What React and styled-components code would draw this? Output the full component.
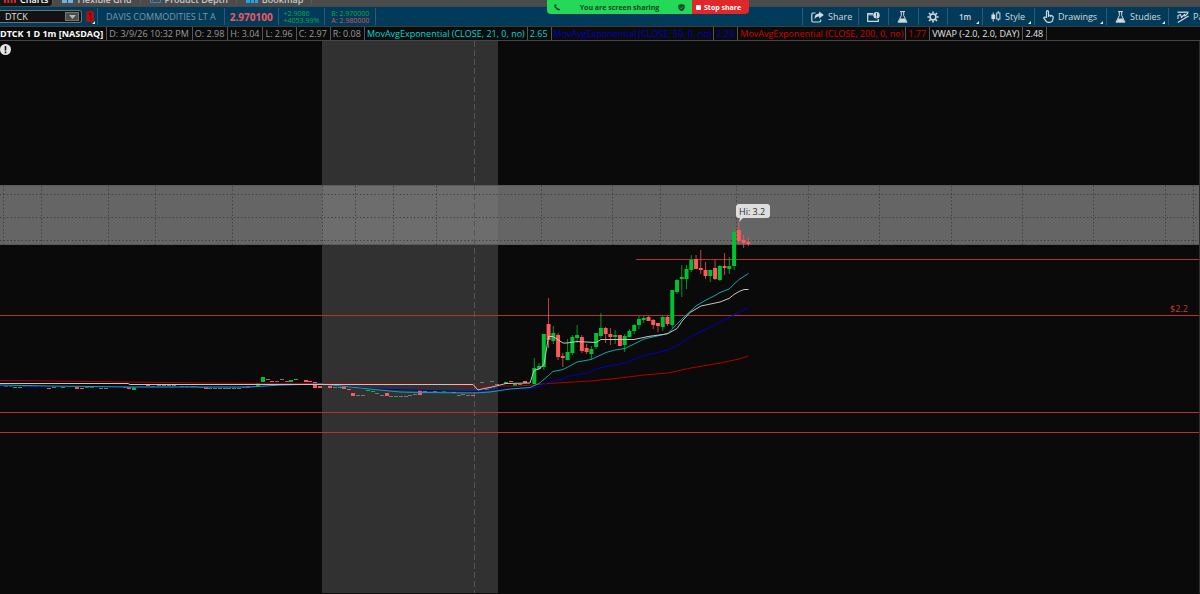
import { useState } from "react";
import styled, { createGlobalStyle } from "styled-components";

const GlobalStyle = createGlobalStyle`
  * {
    box-sizing: border-box;
  }

  body {
    margin: 0;
    background-color: #0a0a0a;
    font-family: "Open Sans", "Noto Sans", sans-serif;
    font-size: 9px;
    overflow-x: hidden;
  }

  button,
  input {
    font: inherit;
    color: inherit;
  }
`;

const Page = styled.div`
  position: relative;
  min-height: 100vh;
  color: #c9d1d6;
`;

const TabStrip = styled.nav`
  display: flex;
  align-items: flex-end;
  height: 7px;
  overflow: hidden;
  background-color: #4b4b4b;
  border-bottom: 1px solid #3c4a52;
`;

const Tab = styled.button`
  display: flex;
  align-items: flex-start;
  gap: 4px;
  height: 12px;
  padding: 0 8px 0 9px;
  border: none;
  border-right: 1px solid #5c5c5c;
  border-radius: 0 0 4px 0;
  background-color: ${(props) => (props.$active ? "#141414" : "#4b4b4b")};
  color: ${(props) => (props.$active ? "#ffffff" : "#c8c8c8")};
  font-weight: 600;
  line-height: 12px;
  white-space: nowrap;

  &:first-child {
    padding-left: 4px;
    padding-right: 4px;
  }
`;

const Toolbar = styled.header`
  display: flex;
  justify-content: space-between;
  height: 19px;
  background-color: #023b59;
  overflow: hidden;
`;

const Group = styled.div`
  display: flex;
  align-items: center;
  white-space: nowrap;
`;

const SymbolBox = styled.div`
  display: flex;
  align-items: center;
  width: 82px;
  height: 13px;
  padding-right: 2px;
  background-color: #121212;
  border: 1px solid #6c7478;
  border-left: none;
  border-radius: 0 3px 3px 0;
`;

const SymbolInput = styled.input`
  flex: 1;
  min-width: 0;
  padding: 0 0 0 5px;
  border: none;
  outline: none;
  background: transparent;
  color: #e0e0e0;
`;

const DropButton = styled.button`
  display: flex;
  align-items: center;
  justify-content: center;
  width: 14px;
  height: 9px;
  padding: 0;
  border: 1px solid #777777;
  background-color: #4c4c4c;
`;

const LinkBadge = styled.button`
  position: relative;
  width: 8px;
  height: 11px;
  margin: 0 3px 0 4px;
  padding: 0;
  border: none;
  border-radius: 2px;
  background-color: #b00d12;
  color: #3a0a0c;
  line-height: 11px;
`;

const Quote = styled.div`
  display: flex;
  flex-direction: column;
  justify-content: center;
  height: 17px;
  padding: 0 ${(props) => props.$pad || 5}px;
  border-left: 1px solid #2c5a74;
  color: ${(props) => props.$color};
  font-size: ${(props) => props.$size || 9}px;
  font-weight: ${(props) => (props.$bold ? 700 : 400)};
  line-height: ${(props) => props.$line || 12}px;
`;

const Down = styled.span`
  color: #cf5563;
`;

const Tool = styled.button`
  position: relative;
  flex: 0 0 ${(props) => props.$width}px;
  display: flex;
  align-items: center;
  gap: 4px;
  height: 17px;
  padding: 0 0 0 8px;
  border: none;
  border-left: 1px solid #2c5a74;
  background: transparent;
  color: #d3dade;
  overflow: hidden;
  cursor: pointer;

  svg {
    flex: none;
  }
`;

const Interval = styled(Tool)`
  padding-left: 11px;
  font-weight: 600;
  font-size: 8px;
`;

const Corner = styled.span`
  position: absolute;
  right: ${(props) => (props.$flush ? -1 : 3)}px;
  bottom: ${(props) => (props.$flush ? -2 : 1)}px;
  border-left: 3px solid transparent;
  border-bottom: 3px solid #e4e8ea;
`;

const StudyRow = styled.div`
  display: flex;
  height: 15px;
  background-color: #0b0b0b;
  border-top: 1px solid #3c3c3c;
  border-bottom: 1px solid #454545;
  overflow: hidden;
`;

const StudyCell = styled.div`
  padding: 0 ${(props) => (props.$long ? 2 : 3)}px 0 2px;
  border-right: 1px solid #555555;
  color: ${(props) => props.$color || "#9a9a9a"};
  font-weight: ${(props) => (props.$bold ? 700 : 400)};
  line-height: 13px;
  white-space: nowrap;

  &:first-child {
    padding-left: 0;
  }
`;

const ShareBanner = styled.div`
  position: absolute;
  top: 0;
  left: 547px;
  display: flex;
  width: 202px;
  height: 14px;
  border-radius: 0 0 4px 4px;
  overflow: hidden;
  font-size: 7px;
  font-weight: 700;
  white-space: nowrap;
`;

const ShareStatus = styled.div`
  flex: 1;
  display: flex;
  align-items: center;
  justify-content: space-between;
  padding: 0 7px;
  background-color: #24d957;
  color: #12482a;
`;

const StopButton = styled.button`
  display: flex;
  align-items: center;
  gap: 3px;
  width: 57px;
  padding: 0 0 0 4px;
  border: none;
  background-color: #e02729;
  color: #ffffff;
`;

const StopSquare = styled.span`
  width: 5px;
  height: 5px;
  border-radius: 1px;
  background-color: #ffffff;
`;

const ChartSvg = styled.svg`
  display: block;
  width: 100%;
  height: auto;
`;

const GREEN = "#00c12f";
const RED = "#ff5a5a";
const GRAY = "#777777";

const studies = [
  { text: "DTCK 1 D 1m [NASDAQ]", color: "#ffffff", bold: true },
  { text: "D: 3/9/26 10:32 PM" },
  { text: "O: 2.98" },
  { text: "H: 3.04" },
  { text: "L: 2.96" },
  { text: "C: 2.97" },
  { text: "R: 0.08" },
  { text: "MovAvgExponential (CLOSE, 21, 0, no)", color: "#00d5d5", long: true },
  { text: "2.65", color: "#00d5d5" },
  { text: "MovAvgExponential (CLOSE, 50, 0, no)", color: "#0000c4", long: true },
  { text: "2.29", color: "#0000c4" },
  { text: "MovAvgExponential (CLOSE, 200, 0, no)", color: "#d00000", long: true },
  { text: "1.77", color: "#d00000" },
  { text: "VWAP (-2.0, 2.0, DAY)", color: "#e4e4e4" },
  { text: "2.48", color: "#e4e4e4" },
];

// high, body top, body bottom, low, up
const candles = [
  [358, 368, 384, 384, 1],
  [363, 366, 369, 370, 1],
  [334, 334, 367, 370, 1],
  [298, 324, 340, 348, 0],
  [326, 333, 341, 344, 1],
  [333, 335, 357, 360, 0],
  [353, 356, 358, 367, 0],
  [339, 352, 360, 360, 1],
  [335, 337, 353, 355, 1],
  [325, 335, 338, 343, 1],
  [335, 337, 351, 353, 0],
  [344, 348, 352, 354, 0],
  [346, 349, 354, 360, 1],
  [333, 333, 347, 349, 1],
  [313, 328, 336, 338, 1],
  [327, 328, 334, 343, 0],
  [328, 334, 337, 345, 0],
  [330, 335, 337, 344, 1],
  [335, 335, 346, 346, 0],
  [334, 336, 345, 352, 1],
  [329, 331, 337, 337, 1],
  [324, 325, 331, 334, 1],
  [316, 319, 325, 329, 1],
  [316, 318, 320, 323, 1],
  [316, 317, 321, 321, 0],
  [319, 320, 325, 329, 0],
  [323, 323, 326, 332, 0],
  [316, 317, 327, 331, 1],
  [316, 317, 324, 326, 0],
  [290, 290, 325, 328, 1],
  [279, 280, 292, 294, 1],
  [265, 277, 279, 297, 1],
  [265, 269, 279, 289, 1],
  [255, 260, 270, 272, 1],
  [255, 259, 269, 269, 0],
  [250, 268, 270, 274, 0],
  [262, 270, 276, 279, 0],
  [270, 270, 276, 282, 1],
  [260, 268, 279, 280, 0],
  [265, 266, 280, 281, 1],
  [253, 266, 268, 275, 0],
  [257, 266, 269, 274, 1],
  [229, 232, 266, 270, 1],
  [222, 230, 241, 244, 0],
  [235, 240, 243, 248, 0],
  [237, 242, 244, 246, 0],
];

// flat overnight bars: x, y, height, color
const ticks = [
  [4, 386, 1, RED], [9, 386, 1, GRAY], [13, 387, 1, GREEN], [18, 387, 1, GREEN],
  [23, 386, 1, GRAY], [28, 386, 1, GRAY], [33, 386, 1, GRAY], [42, 386, 1, RED],
  [47, 388, 1, RED], [52, 387, 1, GRAY], [61, 387, 1, GRAY], [75, 387, 2, RED],
  [80, 388, 1, RED], [85, 387, 1, GRAY], [90, 387, 1, GRAY], [99, 388, 1, GRAY],
  [104, 388, 1, GRAY], [123, 387, 1, RED], [127, 387, 2, RED], [132, 387, 3, GREEN],
  [146, 385, 1, RED], [151, 386, 1, RED], [157, 385, 1, GRAY], [162, 385, 1, GRAY],
  [167, 385, 1, GRAY], [172, 385, 1, GRAY], [180, 386, 1, RED], [185, 386, 1, RED],
  [190, 386, 1, RED], [194, 386, 1, GREEN], [199, 387, 1, RED], [204, 387, 2, RED],
  [208, 388, 1, GRAY], [213, 388, 1, GRAY], [218, 388, 1, GRAY], [223, 388, 1, GRAY],
  [227, 388, 1, GRAY], [232, 388, 1, GRAY], [237, 388, 1, GRAY], [242, 387, 1, RED],
  [246, 386, 2, RED], [251, 386, 1, RED], [256, 383, 3, GREEN], [261, 377, 5, GREEN],
  [266, 379, 1, GRAY], [270, 381, 1, RED], [275, 381, 1, GRAY], [280, 379, 1, GRAY],
  [285, 381, 1, GRAY], [289, 380, 2, GREEN], [294, 379, 1, GREEN], [304, 380, 2, RED],
  [308, 381, 1, RED], [313, 382, 6, RED], [318, 386, 2, RED], [328, 386, 2, RED],
  [333, 387, 1, GRAY], [338, 387, 1, GRAY], [342, 386, 3, RED], [347, 389, 1, RED],
  [351, 393, 3, RED], [356, 395, 1, GRAY], [361, 395, 1, GRAY], [366, 390, 1, GREEN],
  [371, 391, 1, GREEN], [375, 393, 1, GRAY], [380, 395, 1, GRAY], [385, 393, 3, RED],
  [389, 396, 1, GRAY], [394, 396, 1, GREEN], [399, 396, 1, GRAY], [404, 396, 1, GRAY],
  [408, 395, 1, GRAY], [413, 394, 1, GRAY], [418, 390, 5, RED], [423, 391, 1, GRAY],
  [433, 391, 1, GRAY], [442, 391, 1, GREEN], [452, 392, 1, RED], [457, 395, 1, GRAY],
  [461, 394, 1, GRAY], [466, 395, 1, GRAY], [471, 395, 1, RED], [480, 382, 1, GRAY],
  [485, 389, 1, GRAY], [490, 381, 1, GRAY], [495, 384, 1, GRAY], [504, 382, 2, GREEN],
  [509, 381, 1, RED], [513, 384, 2, GREEN], [518, 384, 1, GRAY], [523, 381, 2, RED],
];

const averages = [
  {
    color: "#b00000",
    points:
      "0,380.5 50,381 130,382 200,383 300,383.5 430,384 475,386 520,386 548,383.5 591,381 620,378 644,375 668,373 691,368 720,363 739,359 748.5,356",
  },
  {
    color: "#0000c0",
    points:
      "0,386 50,386.5 130,387 250,387 280,385 322,384 345,386.5 375,389 410,390 475,391.5 500,389 530,388.5 539,386.5 546,383.5 553,381 563,379 567,376.5 587,373 601,367.5 625,363 644,355.5 668,350 677,345.5 691,336.5 701,331.5 715,325 729,317.5 739,312.5 748.5,307.5",
  },
  {
    color: "#10a6a6",
    points:
      "0,385 50,386 130,387 250,387 280,385 322,384 350,387 380,390 400,392 420,392.5 475,393 490,392 510,389 530,387.5 539,383.5 548,376 553,371.5 563,369.5 567,367.5 577,362 591,359.5 606,352.5 615,350 625,348.5 644,339 668,333.5 677,324 682,319 696,306 706,300 715,295.5 720,292.5 729,289 739,279.5 748.5,273.5",
  },
  {
    color: "#c4c4c4",
    points:
      "0,383.5 128,383.5 130,384.5 473,384.5 478,390 484,388.5 492,387 500,385 506,383.5 530,383 534,370.5 539,369 544,364.5 548.5,336.5 553,336.5 563,343 567,343 577,341.5 596,342.5 601,339.5 634,339.5 648,336.5 663,334.5 668,333.5 677,328.5 683,320 690,312.5 701,306 720,302 725,300 729,298.5 734,294.5 739,291.5 744,289.5 748.5,289.5",
  },
];

const gridX = [
  3.5, 41.5, 108.5, 155.5, 232.5, 322.5, 355.5, 393.5, 436.5, 541.5, 612.5,
  660.5, 736.5, 808.5, 879.5, 951.5, 1022.5, 1093.5, 1165.5, 1193.5,
];
const gridY = [194.5, 217.5, 240.5];
const levels = [
  [636, 259.5],
  [0, 315.5],
  [0, 412.5],
  [0, 432.5],
];

function ShareIcon() {
  return (
    <svg width="13" height="12" viewBox="0 0 13 12" fill="none" stroke="currentColor">
      <path d="M4.500 2H2Q.8 2 .8 3.200V9.800Q.8 11 2 11H8.500Q9.700 11 9.700 9.800V8.500" strokeWidth="1.2" />
      <path
        d="M8.200 .6 12.800 4 8.200 7.400V5.400C6 5.300 4.700 6 3.800 8.200 3.300 4.800 5 2.700 8.200 2.600z"
        fill="currentColor"
        stroke="none"
      />
    </svg>
  );
}

function HandIcon() {
  return (
    <svg width="11" height="13" viewBox="0 0 11 13" fill="none" stroke="currentColor" strokeLinejoin="round">
      <path
        d="M3.500 7.500V1.700a1 1 0 0 1 2 0V5l3.600.8q1.200.3 1.100 1.500L9.700 10Q9.300 12.300 7 12.300H5Q3.800 12.300 3 11.200L.8 8.200Q.6 7 1.800 7z"
        strokeWidth="1.2"
      />
      <path d="M5.500 5v2M7.400 5.500v1.700" />
    </svg>
  );
}

function FlaskIcon() {
  return (
    <svg width="11" height="12" viewBox="0 0 11 12" fill="none" stroke="currentColor">
      <path d="M3 .6h5M4.3 .6v4L1 11.2h9L6.7 4.6v-4" />
      <path d="M3.3 7.5h4.4l1.7 3.5H1.6z" fill="currentColor" stroke="none" />
    </svg>
  );
}

function GearIcon() {
  return (
    <svg width="12" height="12" viewBox="0 0 12 12" fill="none" stroke="currentColor">
      <circle cx="6" cy="6" r="2.9" strokeWidth="1.5" />
      <path
        d="M6 .4v2M6 9.6v2M.4 6h2M9.6 6h2M2 2l1.5 1.5M8.5 8.5 10 10M10 2 8.5 3.5M3.5 8.5 2 10"
        strokeWidth="1.6"
      />
    </svg>
  );
}

function AlertWindowIcon() {
  return (
    <svg width="13" height="10" viewBox="0 0 13 10" fill="none" stroke="currentColor">
      <path d="M6 1.5H.7v7.8h10.6V7" strokeWidth="1.2" />
      <path d="M1 2.8h5" />
      <circle cx="9.5" cy="3.3" r="3.2" fill="currentColor" stroke="none" />
      <path d="M9.5 1.2v2.6M9.5 4.5v1" stroke="#023b59" />
    </svg>
  );
}

function StyleIcon() {
  return (
    <svg width="10" height="11" viewBox="0 0 10 11" fill="none" stroke="currentColor">
      <path d="M2.2 1.5v9M7.3 0v2M7.3 8v2" />
      <rect x=".4" y="3.5" width="3.8" height="4.5" fill="currentColor" stroke="none" />
      <rect x="5.7" y="2" width="3.2" height="6" />
    </svg>
  );
}

function PatternsIcon() {
  return (
    <svg width="12" height="12" viewBox="0 0 12 12" fill="none" stroke="currentColor">
      <path d="M.5 1.200h11" strokeWidth="1.3" />
      <path d="M.8 11.500 11.500 5" strokeWidth="1.2" />
      <path d="M1 8V4.500L3.500 3.500 4.500 6.500 7.500 3.500 8 5 11 2" strokeWidth="1.1" />
    </svg>
  );
}

function TabIcon({ kind }) {
  if (kind === "bars") {
    return (
      <svg width="12" height="9" viewBox="0 0 12 9" stroke="#d0272b" strokeWidth="2">
        <path d="M1 4v5M4.3 2v7M7.6 3v6M11 1v8" />
      </svg>
    );
  }
  if (kind === "grid") {
    return (
      <svg width="11" height="9" viewBox="0 0 11 9" fill="#6db3e6">
        <path d="M0 0h5v4H0zM6 0h5v4H6zM0 5h5v4H0zM6 5h5v4H6z" />
      </svg>
    );
  }
  if (kind === "depth") {
    return (
      <svg width="11" height="9" viewBox="0 0 11 9" fill="none" stroke="#2a8cc4">
        <path d="M.5 .5h10v8H.5zM2 7l3-3 3 2" />
      </svg>
    );
  }
  return (
    <svg width="12" height="9" viewBox="0 0 12 9" fill="#1fa3ea">
      <path d="M0 2h4v7H0zM5 6h3v3H5zM9 3h3v6H9z" />
    </svg>
  );
}

function PriceChart() {
  return (
    <ChartSvg viewBox="0 41 1200 552" role="img" aria-label="DTCK price chart">
      <rect x="0" y="41" width="1200" height="553" fill="#0a0a0a" />
      <rect x="322" y="41" width="176" height="553" fill="#313131" />
      <rect x="0" y="185" width="1200" height="60" fill="#656565" />
      <rect x="322" y="185" width="176" height="60" fill="#6d6d6d" />
      <path d="M0 185.5h1200M0 244.5h1200" stroke="#5a5a5a" />

      <g stroke="#3c3c3c" strokeDasharray="1.2 2.4">
        {gridY.map((y) => (
          <line key={y} x1="0" x2="1200" y1={y} y2={y} />
        ))}
        {gridX.map((x) => (
          <line key={x} x1={x} x2={x} y1="186" y2="245" />
        ))}
      </g>
      <line x1="474.5" x2="474.5" y1="41" y2="594" stroke="#555555" strokeDasharray="6 3" />

      {levels.map(([x, y]) => (
        <line key={y} x1={x} x2="1200" y1={y} y2={y} stroke="#b03232" />
      ))}

      {ticks.map(([x, y, h, color]) => (
        <rect key={x} x={x} y={y} width="4" height={h} fill={color} />
      ))}
      {candles.map(([high, top, bottom, low, up], i) => {
        const x = 534.3 + i * 4.757;
        const color = up ? GREEN : RED;
        return (
          <g key={i}>
            <line x1={x} x2={x} y1={high} y2={low} stroke={color} strokeOpacity="0.75" />
            <rect x={x - 2} y={top} width="4" height={bottom - top} fill={color} />
          </g>
        );
      })}

      {averages.map((line) => (
        <polyline key={line.color} points={line.points} fill="none" stroke={line.color} />
      ))}

      <path
        d="M739 204h28a3 3 0 0 1 3 3v8a3 3 0 0 1-3 3h-24l-4 4 1-4h-1a3 3 0 0 1-3-3v-8a3 3 0 0 1 3-3z"
        fill="#dedede"
      />
      <text x="739" y="215" fontSize="9" fill="#2d2d2d">
        Hi: 3.2
      </text>
      <text x="1170" y="312" fontSize="9" fill="#c93636">
        $2.2
      </text>

      <circle cx="5.5" cy="49.5" r="5.5" fill="#e6e6e6" />
      <path d="M5.5 46v4.5M5.5 51.5v1.7" stroke="#111111" strokeWidth="1.6" />
      <line x1="1199.5" x2="1199.5" y1="41" y2="594" stroke="#303030" />
    </ChartSvg>
  );
}

export default function App() {
  const [symbol, setSymbol] = useState("DTCK");

  return (
    <>
      <GlobalStyle />
      <Page>
        <TabStrip>
          <Tab $active>
            <TabIcon kind="bars" />
            Charts
          </Tab>
          <Tab>
            <TabIcon kind="grid" />
            Flexible Grid
          </Tab>
          <Tab>
            <TabIcon kind="depth" />
            Product Depth
          </Tab>
          <Tab>
            <TabIcon kind="map" />
            Bookmap
          </Tab>
        </TabStrip>

        <Toolbar>
          <Group>
            <SymbolBox>
              <SymbolInput
                aria-label="Symbol"
                value={symbol}
                onChange={(e) => setSymbol(e.target.value)}
              />
              <DropButton aria-label="Symbol list">
                <svg width="7" height="4" viewBox="0 0 7 4" fill="#b5b5b5">
                  <path d="M0 0h7L3.5 4z" />
                </svg>
              </DropButton>
            </SymbolBox>
            <LinkBadge>
              1
              <Corner $flush />
            </LinkBadge>
            <Quote $color="#7f95a2" $pad={8}>
              DAVIS COMMODITIES LT A
            </Quote>
            <Quote $color="#f4575f" $size={10} $bold>
              2.970100
            </Quote>
            <Quote $color="#12a84a" $size={7} $line={7}>
              <span>+2.9086</span>
              <span>+4053.99%</span>
            </Quote>
            <Quote $color="#12a84a" $size={7} $line={7} $pad={6}>
              <span>B: 2.970000</span>
              <Down>A: 2.980000</Down>
            </Quote>
            <Quote />
          </Group>

          <Group>
            <Tool $width={56}>
              <ShareIcon />
              Share
            </Tool>
            <Tool $width={30} aria-label="Alerts">
              <AlertWindowIcon />
            </Tool>
            <Tool $width={30} aria-label="Lab">
              <FlaskIcon />
            </Tool>
            <Tool $width={29} aria-label="Settings">
              <GearIcon />
            </Tool>
            <Interval $width={35}>
              1m
              <Corner />
            </Interval>
            <Tool $width={52}>
              <StyleIcon />
              Style
              <Corner />
            </Tool>
            <Tool $width={72}>
              <HandIcon />
              Drawings
              <Corner />
            </Tool>
            <Tool $width={62}>
              <FlaskIcon />
              Studies
              <Corner />
            </Tool>
            <Tool $width={32}>
              <PatternsIcon />
              Patterns
            </Tool>
          </Group>
        </Toolbar>

        <StudyRow>
          {studies.map((study) => (
            <StudyCell
              key={study.text}
              $color={study.color}
              $bold={study.bold}
              $long={study.long}
            >
              {study.text}
            </StudyCell>
          ))}
        </StudyRow>

        <PriceChart />

        <ShareBanner>
          <ShareStatus>
            <svg width="7" height="7" viewBox="0 0 7 7" fill="none" stroke="#12482a">
              <path d="M1 .5v2.2L4 5.5h2M.5 2.5 2.5 .8" strokeWidth="1.5" />
            </svg>
            You are screen sharing
            <svg width="7" height="7" viewBox="0 0 7 7">
              <path d="M3.5 0 6.7 1v2.5c0 1.8-1.5 3-3.2 3.5C1.8 6.5.3 5.3.3 3.5V1z" fill="#12482a" />
              <path d="M2 3.5l1.2 1.2 2-2.2" fill="none" stroke="#24d957" strokeWidth=".8" />
            </svg>
          </ShareStatus>
          <StopButton>
            <StopSquare />
            Stop share
          </StopButton>
        </ShareBanner>
      </Page>
    </>
  );
}
